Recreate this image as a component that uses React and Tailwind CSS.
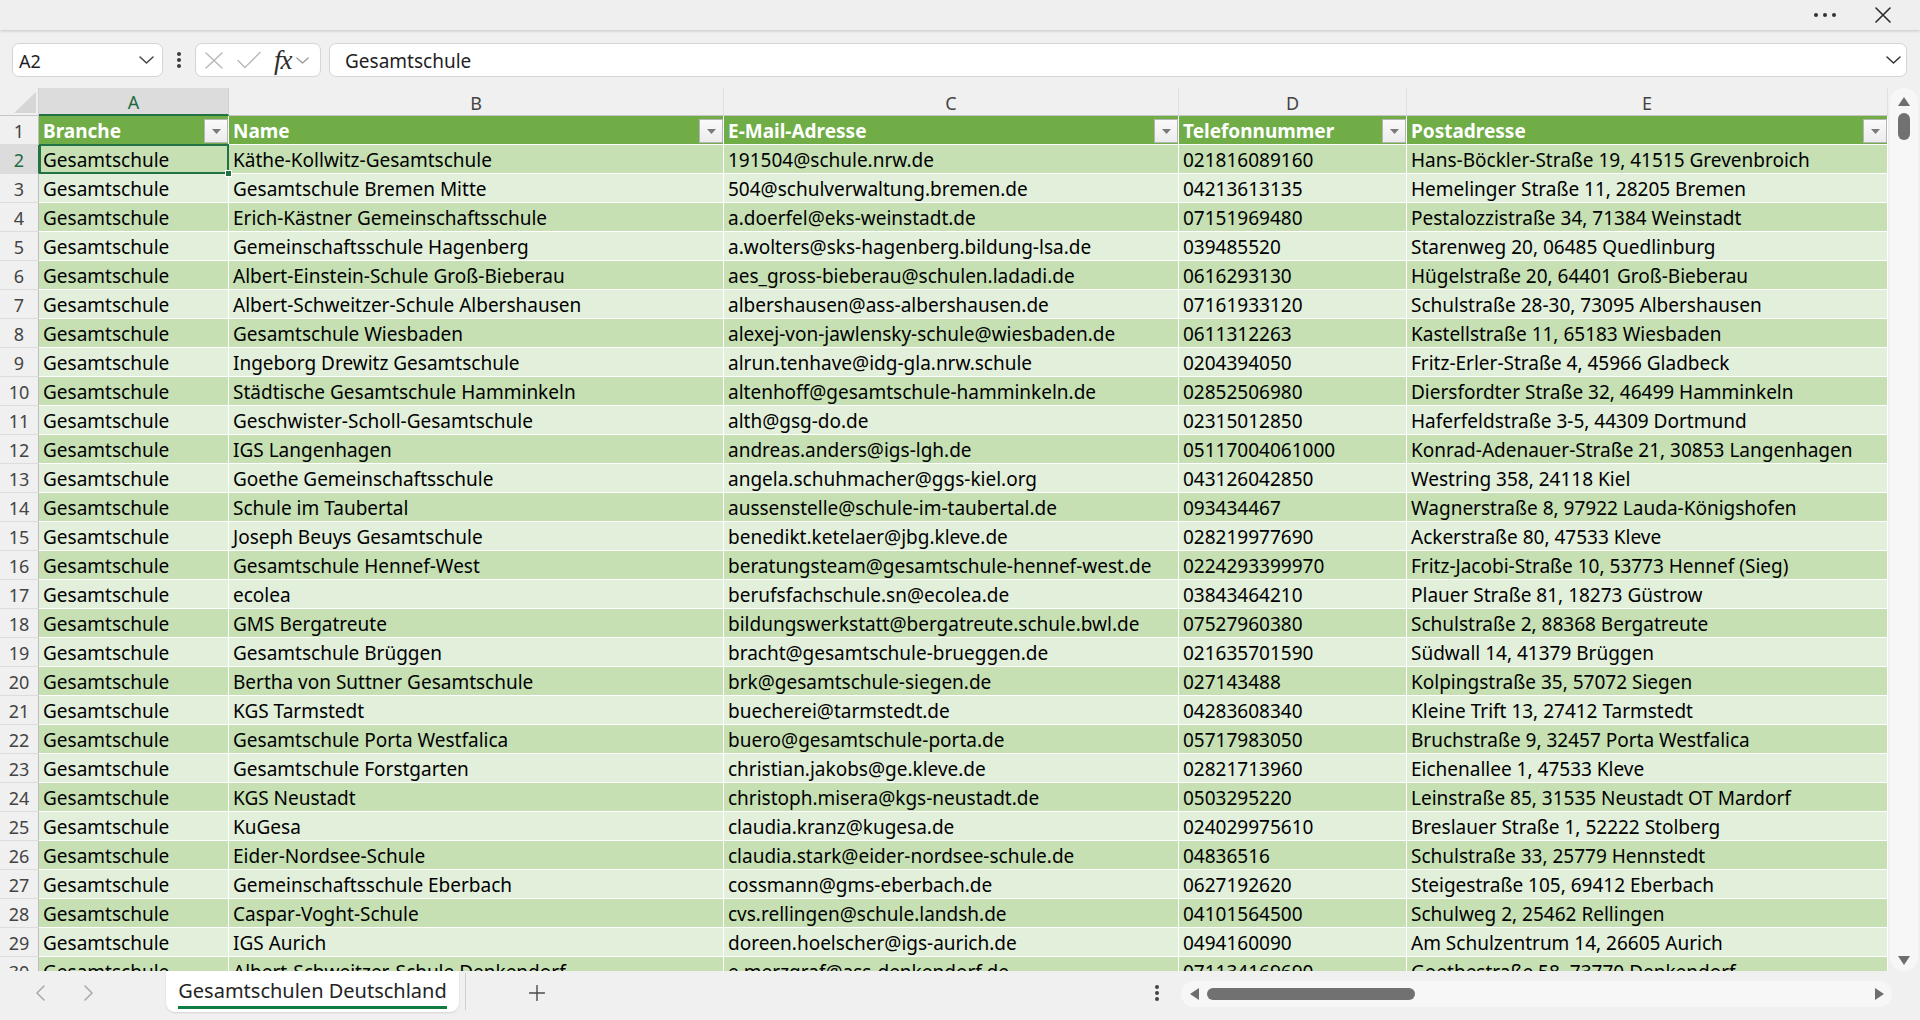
import React from "react";

const columns = [
  { letter: "A", head: "Branche" },
  { letter: "B", head: "Name" },
  { letter: "C", head: "E-Mail-Adresse" },
  { letter: "D", head: "Telefonnummer" },
  { letter: "E", head: "Postadresse" },
];

const data = [
  ["Gesamtschule", "Käthe-Kollwitz-Gesamtschule", "191504@schule.nrw.de", "021816089160", "Hans-Böckler-Straße 19, 41515 Grevenbroich"],
  ["Gesamtschule", "Gesamtschule Bremen Mitte", "504@schulverwaltung.bremen.de", "04213613135", "Hemelinger Straße 11, 28205 Bremen"],
  ["Gesamtschule", "Erich-Kästner Gemeinschaftsschule", "a.doerfel@eks-weinstadt.de", "07151969480", "Pestalozzistraße 34, 71384 Weinstadt"],
  ["Gesamtschule", "Gemeinschaftsschule Hagenberg", "a.wolters@sks-hagenberg.bildung-lsa.de", "039485520", "Starenweg 20, 06485 Quedlinburg"],
  ["Gesamtschule", "Albert-Einstein-Schule Groß-Bieberau", "aes_gross-bieberau@schulen.ladadi.de", "0616293130", "Hügelstraße 20, 64401 Groß-Bieberau"],
  ["Gesamtschule", "Albert-Schweitzer-Schule Albershausen", "albershausen@ass-albershausen.de", "07161933120", "Schulstraße 28-30, 73095 Albershausen"],
  ["Gesamtschule", "Gesamtschule Wiesbaden", "alexej-von-jawlensky-schule@wiesbaden.de", "0611312263", "Kastellstraße 11, 65183 Wiesbaden"],
  ["Gesamtschule", "Ingeborg Drewitz Gesamtschule", "alrun.tenhave@idg-gla.nrw.schule", "0204394050", "Fritz-Erler-Straße 4, 45966 Gladbeck"],
  ["Gesamtschule", "Städtische Gesamtschule Hamminkeln", "altenhoff@gesamtschule-hamminkeln.de", "02852506980", "Diersfordter Straße 32, 46499 Hamminkeln"],
  ["Gesamtschule", "Geschwister-Scholl-Gesamtschule", "alth@gsg-do.de", "02315012850", "Haferfeldstraße 3-5, 44309 Dortmund"],
  ["Gesamtschule", "IGS Langenhagen", "andreas.anders@igs-lgh.de", "05117004061000", "Konrad-Adenauer-Straße 21, 30853 Langenhagen"],
  ["Gesamtschule", "Goethe Gemeinschaftsschule", "angela.schuhmacher@ggs-kiel.org", "043126042850", "Westring 358, 24118 Kiel"],
  ["Gesamtschule", "Schule im Taubertal", "aussenstelle@schule-im-taubertal.de", "093434467", "Wagnerstraße 8, 97922 Lauda-Königshofen"],
  ["Gesamtschule", "Joseph Beuys Gesamtschule", "benedikt.ketelaer@jbg.kleve.de", "028219977690", "Ackerstraße 80, 47533 Kleve"],
  ["Gesamtschule", "Gesamtschule Hennef-West", "beratungsteam@gesamtschule-hennef-west.de", "0224293399970", "Fritz-Jacobi-Straße 10, 53773 Hennef (Sieg)"],
  ["Gesamtschule", "ecolea", "berufsfachschule.sn@ecolea.de", "03843464210", "Plauer Straße 81, 18273 Güstrow"],
  ["Gesamtschule", "GMS Bergatreute", "bildungswerkstatt@bergatreute.schule.bwl.de", "07527960380", "Schulstraße 2, 88368 Bergatreute"],
  ["Gesamtschule", "Gesamtschule Brüggen", "bracht@gesamtschule-brueggen.de", "021635701590", "Südwall 14, 41379 Brüggen"],
  ["Gesamtschule", "Bertha von Suttner Gesamtschule", "brk@gesamtschule-siegen.de", "027143488", "Kolpingstraße 35, 57072 Siegen"],
  ["Gesamtschule", "KGS Tarmstedt", "buecherei@tarmstedt.de", "04283608340", "Kleine Trift 13, 27412 Tarmstedt"],
  ["Gesamtschule", "Gesamtschule Porta Westfalica", "buero@gesamtschule-porta.de", "05717983050", "Bruchstraße 9, 32457 Porta Westfalica"],
  ["Gesamtschule", "Gesamtschule Forstgarten", "christian.jakobs@ge.kleve.de", "02821713960", "Eichenallee 1, 47533 Kleve"],
  ["Gesamtschule", "KGS Neustadt", "christoph.misera@kgs-neustadt.de", "0503295220", "Leinstraße 85, 31535 Neustadt OT Mardorf"],
  ["Gesamtschule", "KuGesa", "claudia.kranz@kugesa.de", "024029975610", "Breslauer Straße 1, 52222 Stolberg"],
  ["Gesamtschule", "Eider-Nordsee-Schule", "claudia.stark@eider-nordsee-schule.de", "04836516", "Schulstraße 33, 25779 Hennstedt"],
  ["Gesamtschule", "Gemeinschaftsschule Eberbach", "cossmann@gms-eberbach.de", "0627192620", "Steigestraße 105, 69412 Eberbach"],
  ["Gesamtschule", "Caspar-Voght-Schule", "cvs.rellingen@schule.landsh.de", "04101564500", "Schulweg 2, 25462 Rellingen"],
  ["Gesamtschule", "IGS Aurich", "doreen.hoelscher@igs-aurich.de", "0494160090", "Am Schulzentrum 14, 26605 Aurich"],
  ["Gesamtschule", "Albert-Schweitzer-Schule Denkendorf", "e.merzgraf@ass-denkendorf.de", "071134169690", "Goethestraße 58, 73770 Denkendorf"],
];

function Chevron({ className = "", color = "#444", w = 15, h = 8 }) {
  return (
    <svg width={w} height={h} viewBox="0 0 15 8" className={className}>
      <path d="M1 1 L7.5 7 L14 1" fill="none" stroke={color} strokeWidth="1.5" strokeLinecap="round" strokeLinejoin="round" />
    </svg>
  );
}

function VDots({ color = "#444" }) {
  return (
    <div className="flex flex-col gap-[2px]">
      <span className="block w-[4px] h-[4px] rounded-full" style={{ background: color }} />
      <span className="block w-[4px] h-[4px] rounded-full" style={{ background: color }} />
      <span className="block w-[4px] h-[4px] rounded-full" style={{ background: color }} />
    </div>
  );
}

function FilterButton() {
  return (
    <div className="absolute right-0 top-[3px] w-[24px] h-[24px] border border-[#b4b4b4] bg-gradient-to-b from-[#fafafa] to-[#ececec] flex items-center justify-center">
      <svg width="9" height="5" viewBox="0 0 9 5">
        <path d="M0 0 H9 L4.5 5 Z" fill="#7a7a7a" />
      </svg>
    </div>
  );
}

function TopBar() {
  return (
    <div className="relative z-10 h-[30px] shrink-0 bg-[#efefef] shadow-[0_1px_3px_rgba(0,0,0,0.18)] flex items-center justify-end pr-[29px]">
      <div className="flex gap-[5px] mr-[39px]">
        <span className="block w-[4px] h-[4px] rounded-full bg-[#333]" />
        <span className="block w-[4px] h-[4px] rounded-full bg-[#333]" />
        <span className="block w-[4px] h-[4px] rounded-full bg-[#333]" />
      </div>
      <svg width="16" height="16" viewBox="0 0 16 16">
        <path d="M1 1 L15 15 M15 1 L1 15" stroke="#2b2b2b" strokeWidth="1.6" strokeLinecap="round" />
      </svg>
    </div>
  );
}

function FormulaBar() {
  return (
    <div className="mt-[13px] h-[34px] shrink-0 flex pl-[12px] pr-[13px]">
      <div className="w-[151px] bg-white border border-[#d4d4d4] rounded-[7px] flex items-center justify-between pl-[6px] pr-[8px]">
        <span className="pt-[2px] text-[18px] text-[#1f1f1f]">A2</span>
        <Chevron />
      </div>
      <div className="w-[32px] flex items-center justify-center">
        <VDots color="#3a3a3a" />
      </div>
      <div className="w-[126px] bg-white border border-[#d4d4d4] rounded-[7px] flex items-center pl-[9px]">
        <svg width="18" height="17" viewBox="0 0 18 17">
          <path d="M1 1 L17 16 M17 1 L1 16" stroke="#b9b9b9" strokeWidth="1.5" strokeLinecap="round" />
        </svg>
        <svg width="24" height="18" viewBox="0 0 24 18" className="ml-[14px]">
          <path d="M1 9.5 L8 16.5 L23 1.5" fill="none" stroke="#b9b9b9" strokeWidth="1.5" strokeLinecap="round" strokeLinejoin="round" />
        </svg>
        <span className="ml-[13px] italic font-['Liberation_Serif',serif] text-[27px] leading-none text-[#2e2e2e] tracking-[-1px]">fx</span>
        <Chevron className="ml-[4px]" color="#9a9a9a" w={13} h={7} />
      </div>
      <div className="ml-[8px] flex-1 bg-white border border-[#d4d4d4] rounded-[7px] flex items-center justify-between pl-[15px] pr-[5px]">
        <span className="pt-[2px] text-[19px] text-[#1f1f1f]">Gesamtschule</span>
        <Chevron color="#333" />
      </div>
    </div>
  );
}

function Grid() {
  return (
    <div className="w-[1888px] h-full overflow-hidden">
      <div className="grid grid-cols-[39px_190px_495px_455px_228px_481px]">
        {/* corner */}
        <div className="h-[28px] relative border-b border-b-[#c6c6c6] border-r border-r-[#d2d2d2]">
          <svg width="22" height="21" viewBox="0 0 22 21" className="absolute left-[14px] top-[4px]">
            <path d="M22 0 V21 H0 Z" fill="#d6d6d6" />
          </svg>
        </div>
        {columns.map((c, i) =>
          i === 0 ? (
            <div key={c.letter} className="h-[28px] pt-[3px] bg-[#dcdcdc] border-b-2 border-b-[#217346] border-r border-r-[#d2d2d2] flex items-center justify-center text-[18px] text-[#1e6b41]">
              {c.letter}
            </div>
          ) : (
            <div key={c.letter} className="h-[28px] pt-[3px] border-b border-b-[#c6c6c6] border-r border-r-[#e0e0e0] flex items-center justify-center text-[18px] text-[#444]">
              {c.letter}
            </div>
          )
        )}

        {/* header row */}
        <div className="h-[29px] pt-[2px] border-b border-b-[#dcdcdc] border-r border-r-[#bdbdbd] flex items-center justify-center text-[18px] text-[#444]">1</div>
        {columns.map((c) => (
          <div key={c.head} className="relative h-[29px] bg-[#70ad47] border-b border-r border-white pl-[4px] pt-[1px] font-bold text-[19px] leading-[28px] text-white whitespace-nowrap overflow-hidden">
            {c.head}
            <FilterButton />
          </div>
        ))}

        {/* data rows */}
        {data.map((row, r) => {
          const n = r + 2;
          const bg = r % 2 === 0 ? "bg-[#c6e0b4]" : "bg-[#e2efda]";
          const selected = n === 2;
          return (
            <React.Fragment key={n}>
              <div
                className={
                  "h-[29px] pt-[2px] border-b border-b-[#dcdcdc] border-r flex items-center justify-center text-[18px] " +
                  (selected ? "bg-[#dcdcdc] text-[#1e6b41] border-r-[#217346]" : "text-[#444] border-r-[#bdbdbd]")
                }
              >
                {n}
              </div>
              {row.map((v, ci) => (
                <div
                  key={ci}
                  className={
                    "relative h-[29px] border-b border-r border-white pl-[4px] pt-[1px] text-[19px] leading-[28px] text-black whitespace-nowrap " +
                    bg +
                    (selected && ci === 0 ? " z-10" : " overflow-hidden")
                  }
                >
                  {v}
                  {selected && ci === 0 && (
                    <>
                      <div className="absolute left-0 top-[-1px] right-[-1px] bottom-[-1px] border-2 border-[#217346] pointer-events-none" />
                      <div className="absolute right-[-4px] bottom-[-4px] w-[7px] h-[7px] bg-[#217346] border border-white" />
                    </>
                  )}
                </div>
              ))}
            </React.Fragment>
          );
        })}
      </div>
    </div>
  );
}

function VScroll() {
  return (
    <div className="w-[32px] h-full pl-[2px] pr-[2px]">
      <div className="h-full rounded-full bg-[#f7f7f7] flex flex-col items-center pt-[9px] pb-[6px]">
        <svg width="12" height="9" viewBox="0 0 12 9">
          <path d="M6 0 L12 9 H0 Z" fill="#6e6e6e" />
        </svg>
        <div className="mt-[7px] w-[12px] h-[27px] rounded-full bg-[#717171]" />
        <div className="flex-1" />
        <svg width="12" height="9" viewBox="0 0 12 9">
          <path d="M0 0 H12 L6 9 Z" fill="#6e6e6e" />
        </svg>
      </div>
    </div>
  );
}

function BottomBar() {
  return (
    <div className="h-[49px] shrink-0 flex">
      <div className="w-[166px] h-[44px] flex items-center pl-[36px]">
        <svg width="9" height="16" viewBox="0 0 9 16">
          <path d="M8 1 L1 8 L8 15" fill="none" stroke="#a8a8a8" strokeWidth="1.5" strokeLinecap="round" strokeLinejoin="round" />
        </svg>
        <svg width="9" height="16" viewBox="0 0 9 16" className="ml-[39px]">
          <path d="M1 1 L8 8 L1 15" fill="none" stroke="#a8a8a8" strokeWidth="1.5" strokeLinecap="round" strokeLinejoin="round" />
        </svg>
      </div>
      <div className="w-[293px] h-[41px] bg-white rounded-b-[9px] shadow-[0_1px_2px_rgba(0,0,0,0.12)] flex justify-center">
        <div className="mt-[7px] h-[31px] border-b-[3px] border-b-[#107c41] text-[20px] leading-[26px] text-[#242424] whitespace-nowrap">
          Gesamtschulen Deutschland
        </div>
      </div>
      <div className="ml-[6px] mt-[2px] w-px h-[37px] bg-[#cfcfcf]" />
      <div className="ml-[63px] h-[44px] flex items-center">
        <svg width="16" height="16" viewBox="0 0 16 16">
          <path d="M8 0.5 V15.5 M0.5 8 H15.5" stroke="#4a4a4a" strokeWidth="1.4" strokeLinecap="round" />
        </svg>
      </div>
      <div className="flex-1" />
      <div className="h-[44px] flex items-center">
        <VDots color="#444" />
      </div>
      <div className="ml-[22px] mr-[28px] mt-[10px] w-[711px] h-[26px] rounded-full bg-[#f7f7f7] flex items-center pl-[9px] pr-[8px]">
        <svg width="9" height="12" viewBox="0 0 9 12">
          <path d="M9 0 V12 L0 6 Z" fill="#6e6e6e" />
        </svg>
        <div className="ml-[8px] w-[208px] h-[12px] rounded-full bg-[#717171]" />
        <div className="flex-1" />
        <svg width="9" height="12" viewBox="0 0 9 12">
          <path d="M0 0 V12 L9 6 Z" fill="#6e6e6e" />
        </svg>
      </div>
    </div>
  );
}

export default function App() {
  return (
    <div className="w-[1920px] h-[1020px] bg-[#f0f0f0] flex flex-col overflow-hidden font-['Noto_Sans',sans-serif]">
      <TopBar />
      <FormulaBar />
      <div className="mt-[11px] h-[883px] shrink-0 flex">
        <Grid />
        <VScroll />
      </div>
      <BottomBar />
    </div>
  );
}
